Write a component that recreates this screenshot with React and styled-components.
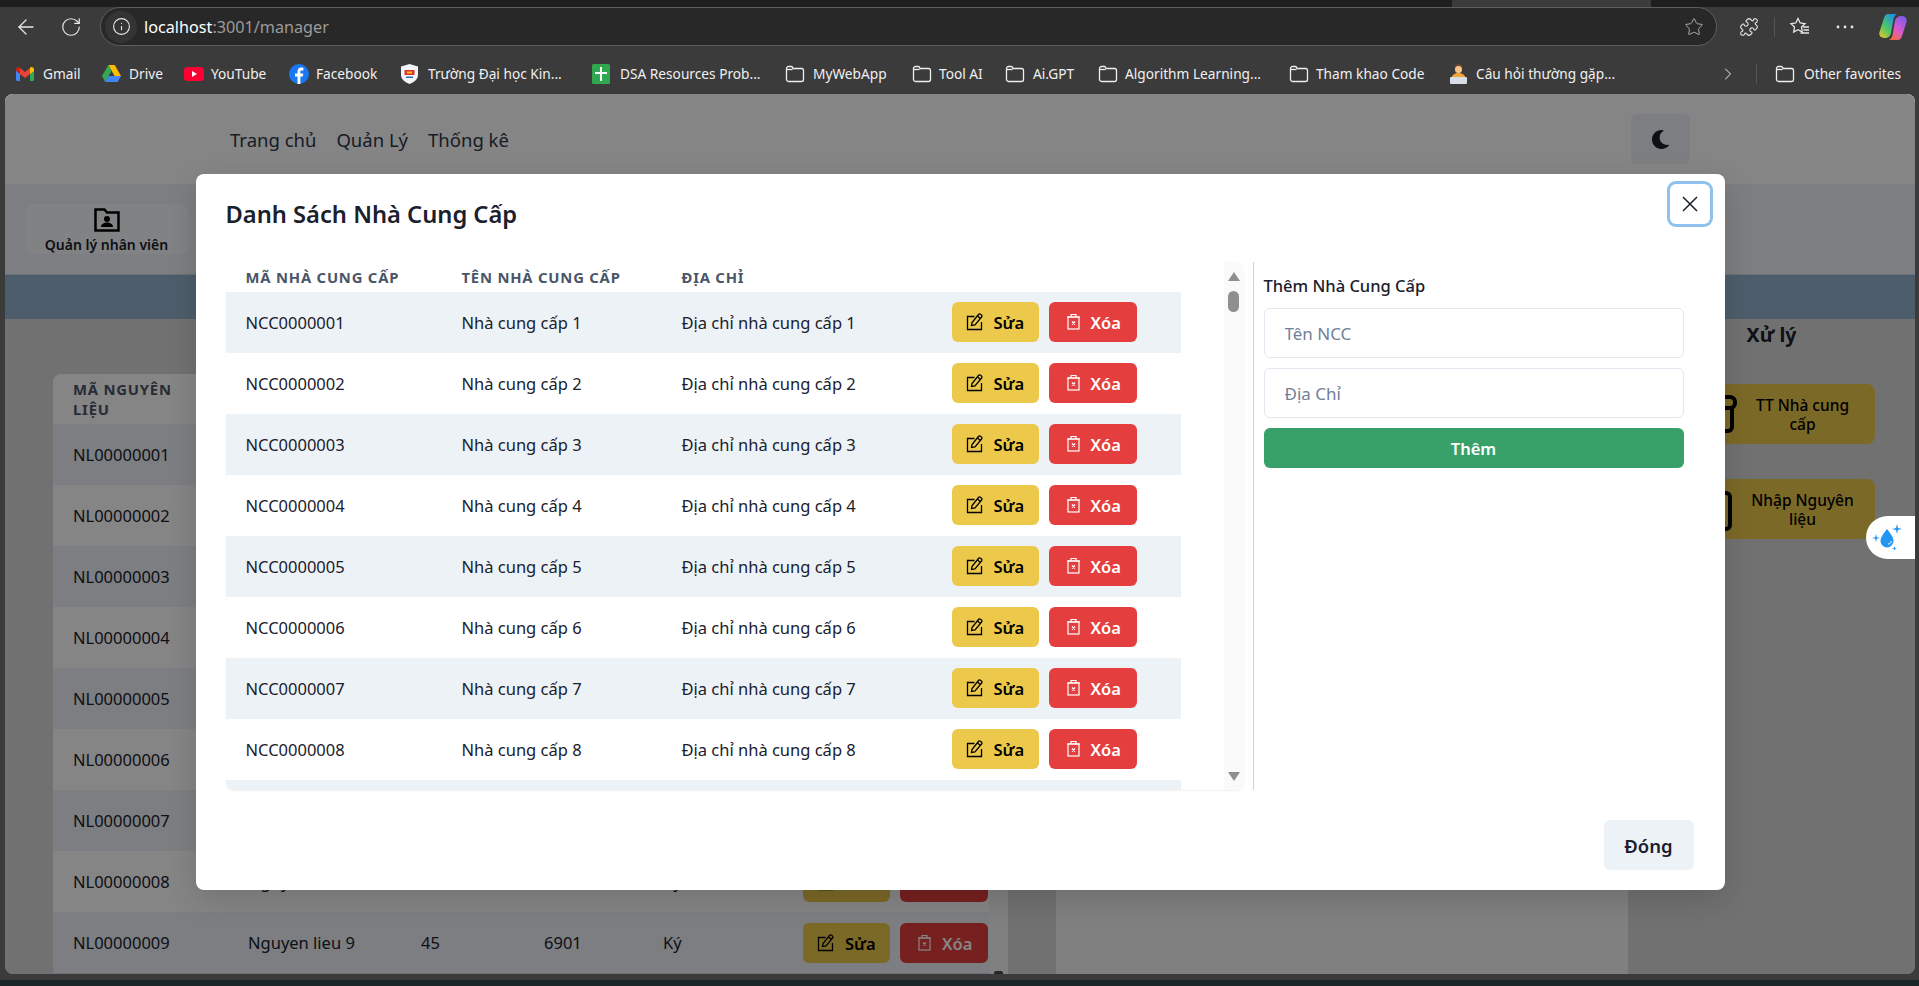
import React from "react";
import styled, { createGlobalStyle } from "styled-components";
import { FaMoon } from "react-icons/fa";
import { ArrowLeft, RotateCw, Star, Puzzle, ChevronRight, Info } from "lucide-react";

const GlobalStyle = createGlobalStyle`
  html, body { margin: 0; height: 100%; overflow: hidden; background: #3b3b3b; }
  * { box-sizing: border-box; }
  body, button, input { font-family: "Noto Sans", "Open Sans", sans-serif; }
`;

const Screen = styled.div`
  height: 986px;
  display: flex;
  flex-direction: column;
  background: #3b3b3b;
`;

/* browser chrome */
const TabStrip = styled.div`
  height: 7px;
  display: grid;
  grid-template-columns: 1452px 199px 1fr;
`;
const TabGap = styled.div`
  background: ${(p) => (p.$active ? "#3b3b3b" : "#1e1e1e")};
`;
const Toolbar = styled.div`
  height: 46px;
  display: flex;
  align-items: flex-start;
  padding: 0 4px 0 3px;
  color: #e8e8e8;
`;
const ToolSlot = styled.div`
  width: ${(p) => p.$w || 44}px;
  height: 39px;
  margin-left: ${(p) => p.$ml || 0}px;
  display: flex;
  align-items: center;
  justify-content: center;
  flex: none;
`;
const UrlBar = styled.div`
  flex: 1;
  height: 39px;
  margin: 0 10px 0 7px;
  border: 1px solid #5e5e5e;
  border-radius: 20px;
  background: #282828;
  display: flex;
  align-items: center;
  padding: 0 12px 0 4px;
`;
const SiteInfo = styled.div`
  width: 32px;
  height: 32px;
  border-radius: 50%;
  background: #343434;
  display: flex;
  align-items: center;
  justify-content: center;
  margin-right: 7px;
`;
const UrlText = styled.div`
  flex: 1;
  font-size: 16.2px;
  color: #9b9b9b;
  b {
    font-weight: 400;
    color: #fff;
  }
`;
const ToolDivider = styled.div`
  width: 1px;
  height: 20px;
  margin: 10px 3px 0;
  background: #555;
`;
const BookmarkBar = styled.div`
  height: 41px;
  display: flex;
  align-items: center;
  padding: 0 17px 0 16px;
  gap: 21px;
  color: #f0f0f0;
  font-size: 13.7px;
`;
const Bookmark = styled.div`
  display: flex;
  align-items: center;
  gap: ${(p) => p.$gap || 10}px;
  flex: none;
`;
const BookmarkLabel = styled.span`
  display: block;
  width: ${(p) => p.$w}px;
  white-space: nowrap;
`;
const BarEnd = styled.div`
  margin-left: auto;
  display: flex;
  align-items: center;
  gap: 18px;
`;
const BarDivider = styled.div`
  width: 1px;
  height: 20px;
  background: #555;
`;
const BottomEdge = styled.div`
  height: 12px;
  border-top: 6px solid #3b3b3b;
  background: #1a2528;
`;

/* the app page behind the modal */
const PageFrame = styled.div`
  height: 880px;
  margin: 0 4px 0 5px;
  position: relative;
  overflow: hidden;
  border-radius: 8px;
  display: flex;
  flex-direction: column;
  background: #d9d9d9;
  color: #1a202c;
`;
const Nav = styled.div`
  height: 90px;
  flex: none;
  background: #fff;
  padding: 0 225px;
  display: flex;
  align-items: center;
  gap: 20px;
  font-size: 18.5px;
  color: #2d3748;
`;
const ThemeButton = styled.button`
  width: 59px;
  height: 50px;
  margin: 0 0 0 auto;
  padding: 0;
  border: 0;
  border-radius: 6px;
  background: #edf2f7;
  color: #1a202c;
  display: flex;
  align-items: center;
  justify-content: center;
`;
const ToolBand = styled.div`
  height: 91px;
  flex: none;
  padding: 20px;
  background: #edf2f7;
  border-bottom: 1px solid #cbd5e0;
`;
const ToolCard = styled.div`
  width: 163px;
  height: 50px;
  border-radius: 8px;
  background: #f7fafc;
  display: flex;
  flex-direction: column;
  align-items: center;
  justify-content: flex-end;
  gap: 3px;
  font-size: 14px;
  font-weight: 600;
  line-height: 19px;
`;
const BlueBand = styled.div`
  height: 44px;
  flex: none;
  background: #96b3ce;
`;
const Main = styled.div`
  flex: 1;
  min-height: 0;
  display: grid;
  grid-template-columns: 1051px 572px 1fr;
`;
const LeftPanel = styled.div`
  padding: 55px 0 0 48px;
  overflow: hidden;
  display: flex;
  align-items: stretch;
`;
const TableBox = styled.div`
  width: 936px;
  flex: none;
  border-radius: 8px 8px 0 0;
  overflow: hidden;
`;
const PageScroll = styled.div`
  width: 19px;
  flex: none;
  background: #f5f5f5;
  display: flex;
  flex-direction: column;
  align-items: center;
  justify-content: flex-end;
`;
const ScrollNub = styled.div`
  width: 9px;
  height: 3px;
  border-radius: 2px 2px 0 0;
  background: #4a4a4a;
`;
const MiddlePanel = styled.div`
  background: #f6f6f6;
`;
const RightPanel = styled.div`
  display: flex;
  flex-direction: column;
  align-items: center;
`;
const SideTitle = styled.h3`
  margin: 0;
  height: 65px;
  line-height: 32px;
  font-size: 19.5px;
  font-weight: 700;
`;
const SideList = styled.div`
  align-self: flex-start;
  margin-left: 40px;
  display: flex;
  flex-direction: column;
  gap: 35px;
`;
const SideCard = styled.div`
  width: 207px;
  height: 60px;
  border-radius: 8px;
  background: #ecc94b;
  color: #000;
  display: flex;
  align-items: center;
  justify-content: flex-end;
  gap: 13px;
  padding-right: 20px;
  font-size: 15.5px;
  font-weight: 500;
  line-height: 19px;
  text-align: center;
  span {
    width: 105px;
    padding-top: 2px;
  }
`;
const DropTab = styled.div`
  position: absolute;
  z-index: 20;
  right: 0;
  top: 422px;
  width: 49px;
  height: 43px;
  background: #fff;
  border-radius: 22px 0 0 22px;
  display: flex;
  align-items: center;
  padding-left: 6px;
`;

/* modal */
const Overlay = styled.div`
  position: absolute;
  z-index: 10;
  inset: 0;
  background: rgba(0, 0, 0, 0.48);
  display: flex;
  justify-content: center;
  padding-top: 80px;
`;
const Modal = styled.section`
  position: relative;
  width: 1529px;
  height: 716px;
  border-radius: 8px;
  background: #fff;
  box-shadow: 0 10px 30px rgba(0, 0, 0, 0.14);
  display: flex;
  flex-direction: column;
`;
const ModalTitle = styled.h2`
  margin: 0;
  height: 88px;
  padding: 24px 30px 0;
  font-size: 23.7px;
  font-weight: 600;
  line-height: 32px;
  color: #1a202c;
`;
const CloseButton = styled.button`
  position: absolute;
  top: 10px;
  right: 15px;
  width: 40px;
  height: 40px;
  padding: 0;
  border: 0;
  border-radius: 6px;
  background: #fff;
  box-shadow: 0 0 0 3px rgba(66, 153, 225, 0.6);
  color: #1a202c;
  display: flex;
  align-items: center;
  justify-content: center;
`;
const ModalBody = styled.div`
  height: 528px;
  flex: none;
  padding: 0 30px;
  display: flex;
`;
const TableScroll = styled.div`
  width: 1018px;
  height: 528px;
  flex: none;
  border-radius: 8px;
  overflow: hidden;
  display: flex;
  box-shadow: 0 1px 2px rgba(0, 0, 0, 0.06);
`;
const SupplierTable = styled.div`
  width: 955px;
  flex: none;
  margin-right: 43px;
`;
const ScrollTrack = styled.div`
  width: 20px;
  flex: none;
  background: #fafafa;
  display: flex;
  flex-direction: column;
  align-items: center;
  padding: 10px 0 9px;
`;
const Arrow = styled.div`
  width: 0;
  height: 0;
  border-left: 6.5px solid transparent;
  border-right: 6.5px solid transparent;
  ${(p) => (p.$down ? "border-top" : "border-bottom")}: 9px solid #8f8f8f;
  ${(p) => p.$down && "margin-top: auto;"}
`;
const Thumb = styled.div`
  width: 11px;
  height: 21px;
  margin-top: 10px;
  border-radius: 6px;
  background: #8f8f8f;
`;
const HeadRow = styled.div`
  display: grid;
  grid-template-columns: ${(p) => p.$cols};
  height: ${(p) => p.$h}px;
  align-items: center;
  background: #fff;
`;
const HeadCell = styled.div`
  padding: 0 20px;
  font-size: 14.8px;
  font-weight: 700;
  letter-spacing: 0.8px;
  line-height: 20px;
  color: #4a5568;
  text-transform: uppercase;
  white-space: ${(p) => (p.$wrap ? "normal" : "nowrap")};
`;
const Row = styled.div`
  display: grid;
  grid-template-columns: ${(p) => p.$cols};
  height: 61px;
  align-items: center;
  background: ${(p) => (p.$odd ? "#edf2f7" : "#fff")};
`;
const Cell = styled.div`
  padding: 0 0 1px 20px;
  font-size: 16.5px;
  color: #1a202c;
  white-space: nowrap;
`;
const Actions = styled.div`
  align-self: start;
  padding: ${(p) => p.$top}px 0 0 20px;
  display: flex;
  gap: 10px;
`;
const ActionButton = styled.button`
  height: 40px;
  width: ${(p) => (p.$danger ? 88 : 87)}px;
  padding: 0 0 0 ${(p) => (p.$danger ? 16 : 14)}px;
  border: 0;
  border-radius: 6px;
  background: ${(p) => (p.$danger ? "#e53e3e" : "#ecc94b")};
  color: ${(p) => (p.$danger ? "#fff" : "#000")};
  display: flex;
  align-items: center;
  gap: ${(p) => (p.$danger ? 8 : 10)}px;
  font-size: 16.5px;
  font-weight: 600;
`;
const Divider = styled.div`
  width: 1px;
  margin-left: 9px;
  background: #cbd5e0;
  flex: none;
`;
const AddForm = styled.form`
  width: 420px;
  margin-left: 10px;
  display: flex;
  flex-direction: column;
  gap: 10px;
`;
const FormTitle = styled.div`
  height: 36px;
  padding-top: 13px;
  font-size: 16.5px;
  font-weight: 500;
  line-height: 22px;
  color: #1a202c;
`;
const TextInput = styled.input`
  height: 50px;
  padding: 0 20px;
  border: 1px solid #e2e8f0;
  border-radius: 6px;
  background: #fff;
  font-size: 17px;
  color: #1a202c;
  &::placeholder {
    color: #718096;
  }
`;
const AddButton = styled.button`
  height: 40px;
  border: 0;
  border-radius: 6px;
  background: #38a169;
  color: #fff;
  font-size: 16.5px;
  font-weight: 600;
`;
const ModalFooter = styled.div`
  flex: 1;
  padding: 30px 31px 0 0;
  display: flex;
  justify-content: flex-end;
  align-items: flex-start;
`;
const CloseAction = styled.button`
  width: 90px;
  height: 50px;
  border: 0;
  border-radius: 6px;
  background: #edf2f7;
  color: #1a202c;
  font-size: 18.5px;
  font-weight: 600;
`;

/* drawn icons */
const FolderIcon = () => (
  <svg width="20" height="18" viewBox="0 0 20 18" fill="none" stroke="#eee" strokeWidth="1.3">
    <path d="M1.500 3.500a2 2 0 0 1 2-2h2.700a1.500 1.500 0 0 1 1.300.8l.5 1.200h8.500a2 2 0 0 1 2 2v9a2 2 0 0 1-2 2h-13a2 2 0 0 1-2-2z" />
    <path d="M7.500 4.500H1.500" />
  </svg>
);
const GmailIcon = () => (
  <svg width="18" height="14" viewBox="0 0 18 14">
    <path d="M0 2v10.500A1.500 1.500 0 0 0 1.500 14H4V6z" fill="#4285f4" />
    <path d="M18 2v10.500a1.500 1.500 0 0 1-1.500 1.500H14V6z" fill="#34a853" />
    <path d="M4 7V1l5 4 5-4v6L9 11z" fill="#ea4335" />
    <path d="M0 2.500C0 .5 2.300-.6 3.800.6L4 1v6L0 4z" fill="#c5221f" />
    <path d="M18 2.500c0-2-2.300-3.100-3.800-1.900L14 1v6l4-3z" fill="#fbbc04" />
  </svg>
);
const DriveIcon = () => (
  <svg width="19" height="17" viewBox="0 0 19 17">
    <path d="M6.300 0h6.400l6.300 11h-6.400z" fill="#fbbc04" />
    <path d="M6.300 0 0 11l3.200 6 6.300-11z" fill="#34a853" />
    <path d="M3.200 17 6.400 11H19l-3.200 6z" fill="#4285f4" />
  </svg>
);
const YoutubeIcon = () => (
  <svg width="20" height="14" viewBox="0 0 20 14">
    <rect width="20" height="14" rx="3.500" fill="#ff0033" />
    <path d="m8 4 5 3-5 3z" fill="#fff" />
  </svg>
);
const FacebookIcon = () => (
  <svg width="20" height="20" viewBox="0 0 20 20">
    <circle cx="10" cy="10" r="10" fill="#1877f2" />
    <path d="M11.400 20v-7.500h2.500l.4-2.900h-2.900V7.800c0-.9.3-1.400 1.500-1.400h1.500V3.800c-.7-.1-1.500-.2-2.200-.2-2.300 0-3.700 1.400-3.700 3.800v2.200H6v2.900h2.500V20z" fill="#fff" />
  </svg>
);
const SchoolIcon = () => (
  <svg width="17" height="20" viewBox="0 0 17 20">
    <path d="M8.500 0 17 2.500V11c0 4-4 7.500-8.500 9C4 18.500 0 15 0 11V2.500z" fill="#f2f4f8" />
    <rect x="3.500" y="6" width="10" height="5" fill="#d9362b" />
    <rect x="6" y="7.500" width="5" height="2" fill="#f5c518" />
    <rect x="5" y="12.500" width="7" height="1.500" fill="#2a6db5" />
  </svg>
);
const SheetIcon = () => (
  <svg width="18" height="20" viewBox="0 0 18 20">
    <rect width="18" height="20" rx="1.500" fill="#2fa84f" />
    <path d="M8 3h2v5h5v2h-5v7H8v-7H3V8h5z" fill="#fff" />
  </svg>
);
const LaptopManIcon = () => (
  <svg width="17" height="20" viewBox="0 0 17 20">
    <path d="M4.500 4C4.500 1.500 6.500 0 8.500 0s4 1.500 4 4z" fill="#6b4a2b" />
    <circle cx="8.500" cy="5.500" r="3.500" fill="#f7c58b" />
    <path d="M1.500 15c0-4 3-6 7-6s7 2 7 6z" fill="#f0a63a" />
    <rect y="13" width="17" height="7" rx="1" fill="#d8dee6" />
  </svg>
);
const CopilotIcon = () => (
  <svg width="28" height="28" viewBox="0 0 28 28">
    <defs>
      <linearGradient id="copilotA" x1="0" y1="1" x2="0.8" y2="0">
        <stop offset="0" stopColor="#f5c61c" />
        <stop offset="0.45" stopColor="#4cc66a" />
        <stop offset="1" stopColor="#1b8fe8" />
      </linearGradient>
      <linearGradient id="copilotB" x1="0.8" y1="0" x2="0.2" y2="1">
        <stop offset="0" stopColor="#7c5be8" />
        <stop offset="0.55" stopColor="#d85ad0" />
        <stop offset="1" stopColor="#f5693f" />
      </linearGradient>
    </defs>
    <path d="M9 1h9c-2 1-3 3-3.500 5L12 20c-.5 3-3 5-6 5H5c-3.500 0-5.500-3-4.500-6L5 5C6 2.500 7 1 9 1z" fill="url(#copilotA)" />
    <path d="M19 27h-9c2-1 3-3 3.500-5L16 8c.5-3 3-5 6-5h1c3.500 0 5.500 3 4.500 6L23 23c-1 2.500-2 4-4 4z" fill="url(#copilotB)" />
  </svg>
);
const FavoritesIcon = () => (
  <svg width="22" height="22" viewBox="0 0 22 22" fill="none" stroke="#e8e8e8" strokeWidth="1.300">
    <path d="M9 2.500 11.200 7l4.800.7-3.500 3.400.8 4.900L9 13.700 4.700 16l.8-4.900L2 7.700 6.800 7z" />
    <path d="M14 11h6M14.500 14h5.500M11.500 17H20" />
  </svg>
);
const MoreIcon = () => (
  <svg width="18" height="4" viewBox="0 0 18 4" fill="#e8e8e8">
    <circle cx="2" cy="2" r="1.400" />
    <circle cx="9" cy="2" r="1.400" />
    <circle cx="16" cy="2" r="1.400" />
  </svg>
);
const FolderUserIcon = () => (
  <svg width="26" height="24" viewBox="0 0 26 24">
    <path d="M1.500 1.500h9l2.500 3h11.500v18h-23z" fill="none" stroke="#000" strokeWidth="2.500" />
    <circle cx="13" cy="11" r="3" fill="#000" />
    <path d="M7 19c0-3 3-4.500 6-4.500s6 1.500 6 4.500z" fill="#000" />
  </svg>
);
const EditIcon = () => (
  <svg width="18" height="18" viewBox="0 0 18 18" fill="none" stroke="currentColor" strokeWidth="1.300">
    <path d="M8.500 3.500H1.500v13h14V9" />
    <path d="M5.500 12.500 6 9.500 12.500 1.500a1.400 1.400 0 0 1 2-.2l.9.700a1.400 1.400 0 0 1 .2 2L9 12z" />
    <path d="M11.500 3l3 2.500" />
  </svg>
);
const BinIcon = () => (
  <svg width="18" height="18" viewBox="0 0 18 18" fill="none" stroke="currentColor" strokeWidth="1.200">
    <path d="M2 4h13M6 4V1.500h5V4" />
    <rect x="3" y="4" width="11" height="12" />
    <path d="m7 8.500 3 3m0-3-3 3" strokeWidth="1.400" />
  </svg>
);
const CrossIcon = () => (
  <svg width="16" height="16" viewBox="0 0 16 16" stroke="currentColor" strokeWidth="1.500">
    <path d="m1 1 14 14M15 1 1 15" />
  </svg>
);
const CupIcon = () => (
  <svg width="40" height="40" viewBox="0 0 40 40" fill="none" stroke="#000" strokeWidth="4">
    <rect x="6" y="3" width="32" height="11" rx="5" />
    <path d="M10 14v19a4 4 0 0 0 4 4h17a4 4 0 0 0 4-4V14" />
  </svg>
);
const BoxIcon = () => (
  <svg width="40" height="44" viewBox="0 0 40 44" fill="none" stroke="#000" strokeWidth="4">
    <rect x="3" y="6" width="30" height="36" rx="4" />
  </svg>
);
const DropIcon = () => (
  <svg width="32" height="32" viewBox="0 0 32 32" fill="#2196f3">
    <path d="M15 7c3 4 6.500 8 6.500 12a6.500 6.500 0 0 1-13 0C8.500 15 12 11 15 7z" />
    <path d="M16 22c2 0 3-1 3.300-3" fill="none" stroke="#fff" strokeWidth="1" />
    <path d="m4 12 .8 3.200L8 16l-3.200.8L4 20l-.8-3.200L0 16l3.200-.8zM25 2l1 3.900 4 1-4 1-1 4-1-4-4-1 4-1zM22.500 24l.6 1.900 1.900.6-1.900.6-.6 1.900-.6-1.900-1.900-.6 1.900-.6z" />
  </svg>
);

const bookmarks = [
  { icon: <GmailIcon />, label: "Gmail", w: 38, gap: 9 },
  { icon: <DriveIcon />, label: "Drive", w: 34, gap: 8 },
  { icon: <YoutubeIcon />, label: "YouTube", w: 57, gap: 7 },
  { icon: <FacebookIcon />, label: "Facebook", w: 64, gap: 7 },
  { icon: <SchoolIcon />, label: "Trường Đại học Kin...", w: 143, gap: 10 },
  { icon: <SheetIcon />, label: "DSA Resources Prob...", w: 144, gap: 10 },
  { icon: <FolderIcon />, label: "MyWebApp", w: 78, gap: 8 },
  { icon: <FolderIcon />, label: "Tool AI", w: 45, gap: 7 },
  { icon: <FolderIcon />, label: "Ai.GPT", w: 44, gap: 8 },
  { icon: <FolderIcon />, label: "Algorithm Learning...", w: 143, gap: 7 },
  { icon: <FolderIcon />, label: "Tham khao Code", w: 113, gap: 7 },
  { icon: <LaptopManIcon />, label: "Câu hỏi thường gặp...", w: 145, gap: 9 },
];

const materialCols = "175px 173px 123px 119px 140px 206px";
const supplierCols = "216px 220px 270px 1fr";
// only the last two rows stick out below the modal
const materials = [
  { id: 1 }, { id: 2 }, { id: 3 }, { id: 4 }, { id: 5 }, { id: 6 }, { id: 7 },
  { id: 8, name: "Nguyen lieu 8", qty: "", price: "", unit: "Ký" },
  { id: 9, name: "Nguyen lieu 9", qty: 45, price: 6901, unit: "Ký" },
];
const suppliers = [1, 2, 3, 4, 5, 6, 7, 8];

function RowActions({ top }) {
  return (
    <Actions $top={top}>
      <ActionButton type="button">
        <EditIcon />
        Sửa
      </ActionButton>
      <ActionButton type="button" $danger>
        <BinIcon />
        Xóa
      </ActionButton>
    </Actions>
  );
}

function BrowserChrome() {
  return (
    <>
      <TabStrip>
        <TabGap />
        <TabGap $active />
        <TabGap />
      </TabStrip>
      <Toolbar>
        <ToolSlot $w={45}>
          <ArrowLeft size={24} strokeWidth={1.3} />
        </ToolSlot>
        <ToolSlot $w={45}>
          <RotateCw size={22} strokeWidth={1.3} />
        </ToolSlot>
        <UrlBar>
          <SiteInfo>
            <Info size={19} strokeWidth={1.4} />
          </SiteInfo>
          <UrlText>
            <b>localhost</b>:3001/manager
          </UrlText>
          <Star size={20} strokeWidth={1.2} color="#aaa" />
        </UrlBar>
        <ToolSlot>
          <Puzzle size={20} strokeWidth={1.3} />
        </ToolSlot>
        <ToolDivider />
        <ToolSlot>
          <FavoritesIcon />
        </ToolSlot>
        <ToolSlot $ml={1}>
          <MoreIcon />
        </ToolSlot>
        <ToolSlot $ml={4}>
          <CopilotIcon />
        </ToolSlot>
      </Toolbar>
      <BookmarkBar>
        {bookmarks.map((b) => (
          <Bookmark key={b.label} $gap={b.gap}>
            {b.icon}
            <BookmarkLabel $w={b.w}>{b.label}</BookmarkLabel>
          </Bookmark>
        ))}
        <BarEnd>
          <ChevronRight size={20} strokeWidth={1.2} />
          <BarDivider />
          <Bookmark $gap={9}>
            <FolderIcon />
            <BookmarkLabel $w={98}>Other favorites</BookmarkLabel>
          </Bookmark>
        </BarEnd>
      </BookmarkBar>
    </>
  );
}

function ManagerPage() {
  return (
    <>
      <Nav>
        <span>Trang chủ</span>
        <span>Quản Lý</span>
        <span>Thống kê</span>
        <ThemeButton type="button">
          <FaMoon size={19} />
        </ThemeButton>
      </Nav>
      <ToolBand>
        <ToolCard>
          <FolderUserIcon />
          Quản lý nhân viên
        </ToolCard>
      </ToolBand>
      <BlueBand />
      <Main>
        <LeftPanel>
          <TableBox>
            <HeadRow $cols={materialCols} $h={50}>
              <HeadCell $wrap>Mã nguyên liệu</HeadCell>
            </HeadRow>
            {materials.map((m) => (
              <Row key={m.id} $cols={materialCols} $odd={m.id % 2 === 1}>
                <Cell>NL0000000{m.id}</Cell>
                {m.name && (
                  <>
                    <Cell>{m.name}</Cell>
                    <Cell>{m.qty}</Cell>
                    <Cell>{m.price}</Cell>
                    <Cell>{m.unit}</Cell>
                    <RowActions top={11} />
                  </>
                )}
              </Row>
            ))}
          </TableBox>
          <PageScroll>
            <ScrollNub />
          </PageScroll>
        </LeftPanel>
        <MiddlePanel />
        <RightPanel>
          <SideTitle>Xử lý</SideTitle>
          <SideList>
            <SideCard>
              <CupIcon />
              <span>TT Nhà cung cấp</span>
            </SideCard>
            <SideCard>
              <BoxIcon />
              <span>Nhập Nguyên liệu</span>
            </SideCard>
          </SideList>
        </RightPanel>
      </Main>
    </>
  );
}

function SupplierModal() {
  return (
    <Overlay>
      <Modal>
        <ModalTitle>Danh Sách Nhà Cung Cấp</ModalTitle>
        <CloseButton type="button" aria-label="Close">
          <CrossIcon />
        </CloseButton>
        <ModalBody>
          <TableScroll>
            <SupplierTable>
              <HeadRow $cols={supplierCols} $h={30}>
                <HeadCell>Mã nhà cung cấp</HeadCell>
                <HeadCell>Tên nhà cung cấp</HeadCell>
                <HeadCell>Địa chỉ</HeadCell>
              </HeadRow>
              {suppliers.map((n) => (
                <Row key={n} $cols={supplierCols} $odd={n % 2 === 1}>
                  <Cell>NCC000000{n}</Cell>
                  <Cell>Nhà cung cấp {n}</Cell>
                  <Cell>Địa chỉ nhà cung cấp {n}</Cell>
                  <RowActions top={10} />
                </Row>
              ))}
              {/* next row only shows its top edge above the scroll fold */}
              <Row $cols={supplierCols} $odd />
            </SupplierTable>
            <ScrollTrack>
              <Arrow />
              <Thumb />
              <Arrow $down />
            </ScrollTrack>
          </TableScroll>
          <Divider />
          <AddForm>
            <FormTitle>Thêm Nhà Cung Cấp</FormTitle>
            <TextInput placeholder="Tên NCC" />
            <TextInput placeholder="Địa Chỉ" />
            <AddButton type="button">Thêm</AddButton>
          </AddForm>
        </ModalBody>
        <ModalFooter>
          <CloseAction type="button">Đóng</CloseAction>
        </ModalFooter>
      </Modal>
    </Overlay>
  );
}

export default function App() {
  return (
    <Screen>
      <GlobalStyle />
      <BrowserChrome />
      <PageFrame>
        <ManagerPage />
        <SupplierModal />
        <DropTab>
          <DropIcon />
        </DropTab>
      </PageFrame>
      <BottomEdge />
    </Screen>
  );
}
